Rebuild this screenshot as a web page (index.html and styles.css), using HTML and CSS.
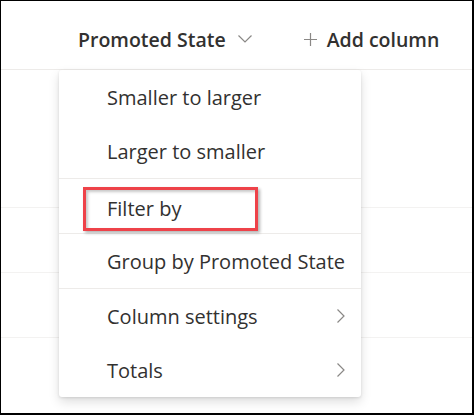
FILE: index.html
```html
<!doctype html>
<html>
  <head>
    <title>Promoted State column menu</title>
    <link rel="stylesheet" href="styles.css">
  </head>
  <body>
    <div class="frame">
      <div class="header">
        <div class="col-head">
          <span>Promoted State</span>
          <svg class="chev-down" width="14" height="8" viewBox="0 0 14 8">
            <path d="M0.5 0.5 L7 7 L13.5 0.5" fill="none" stroke="#8a8886" stroke-width="1.2"/>
          </svg>
        </div>
        <div class="add-col">
          <svg class="plus" width="13" height="13" viewBox="0 0 13 13">
            <path d="M6.5 0 V13 M0 6.5 H13" fill="none" stroke="#8a8886" stroke-width="1.2"/>
          </svg>
          <span>Add column</span>
        </div>
      </div>

      <div class="row row-tall"></div>
      <div class="row"></div>
      <div class="row"></div>

      <!-- column header dropdown -->
      <div class="menu">
        <div class="section">
          <div class="item">Smaller to larger</div>
          <div class="item">Larger to smaller</div>
        </div>
        <div class="section">
          <div class="item"><span class="mark">Filter by</span></div>
        </div>
        <div class="section">
          <div class="item">Group by Promoted State</div>
        </div>
        <div class="section">
          <div class="item">Column settings
            <svg class="chev-right" width="8" height="14" viewBox="0 0 8 14">
              <path d="M0.5 0.5 L7 7 L0.5 13.5" fill="none" stroke="#8a8886" stroke-width="1.2"/>
            </svg>
          </div>
          <div class="item">Totals
            <svg class="chev-right" width="8" height="14" viewBox="0 0 8 14">
              <path d="M0.5 0.5 L7 7 L0.5 13.5" fill="none" stroke="#8a8886" stroke-width="1.2"/>
            </svg>
          </div>
        </div>
      </div>
    </div>
  </body>
</html>
```

FILE: styles.css
```css
body {
  margin: 0;
  font-family: "Open Sans", "Noto Sans", sans-serif;
  color: #323130;
}
.frame {
  position: relative;
  width: 474px;
  height: 415px;
  box-sizing: border-box;
  border-top: 1px solid #000;
  border-left: 1px solid #000;
  border-right: 2px solid #000;
  border-bottom: 2px solid #000;
  background: #fff;
  overflow: hidden;
}
.header {
  display: flex;
  align-items: center;
  height: 69px;
  padding-left: 77px;
  border-bottom: 1px solid #edebe9;
  font-size: 19.5px;
  font-weight: 600;
  padding-top: 8px;
  box-sizing: border-box;
}
.col-head {
  display: flex;
  align-items: center;
  gap: 12px;
}
.add-col {
  display: flex;
  align-items: center;
  gap: 10px;
  margin-left: 52px;
}
.row {
  height: 64px;
  border-bottom: 1px solid #f3f2f1;
}
.row-tall {
  height: 137px;
}
.menu {
  position: absolute;
  left: 58px;
  top: 69px;
  width: 302px;
  background: #fff;
  border-radius: 3px;
  box-shadow: 0 5px 11px rgba(0, 0, 0, 0.13), 0 1px 3px rgba(0, 0, 0, 0.11);
  font-size: 20px;
}
.section + .section {
  border-top: 1px solid #edebe9;
}
.item {
  position: relative;
  display: flex;
  align-items: center;
  justify-content: space-between;
  height: 54px;
  padding: 0 16px 0 48px;
  white-space: nowrap;
}
.mark {
  align-self: flex-end;
  margin: 0 0 2px -24px;
  padding: 0 0 0 21px;
  width: 148px;
  height: 38px;
  line-height: 38px;
  border: 3px solid #ee4249;
  box-shadow: 2px 2px 3px rgba(0, 0, 0, 0.3), inset 2px 2px 3px rgba(0, 0, 0, 0.22);
}
```
